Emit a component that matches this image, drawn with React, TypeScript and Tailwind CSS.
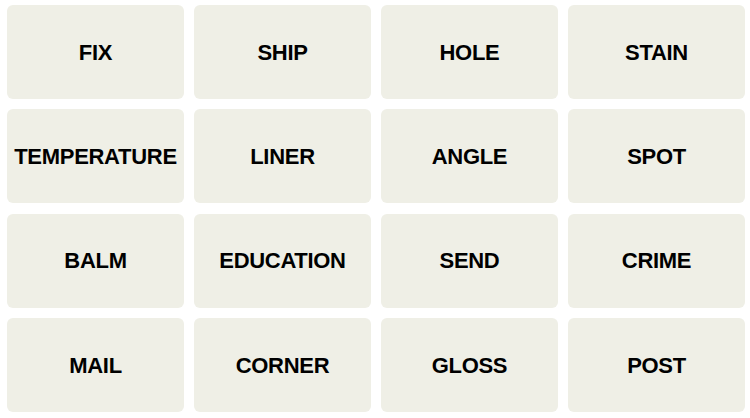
const words = [
  "FIX", "SHIP", "HOLE", "STAIN",
  "TEMPERATURE", "LINER", "ANGLE", "SPOT",
  "BALM", "EDUCATION", "SEND", "CRIME",
  "MAIL", "CORNER", "GLOSS", "POST",
];

export default function App() {
  return (
    <div className="h-[418px] w-[750px] bg-white pl-[7px] pt-[5px] font-['Liberation_Sans',Arial,sans-serif]">
      <div className="grid w-[738px] grid-cols-4 gap-x-[10px] gap-y-[10.4px]">
        {words.map((w) => (
          <button
            key={w}
            className="flex h-[94px] items-center justify-center rounded-[6px] bg-[#efefe6] text-[22px] font-bold uppercase tracking-[-0.3px] text-black"
          >
            {w}
          </button>
        ))}
      </div>
    </div>
  );
}
